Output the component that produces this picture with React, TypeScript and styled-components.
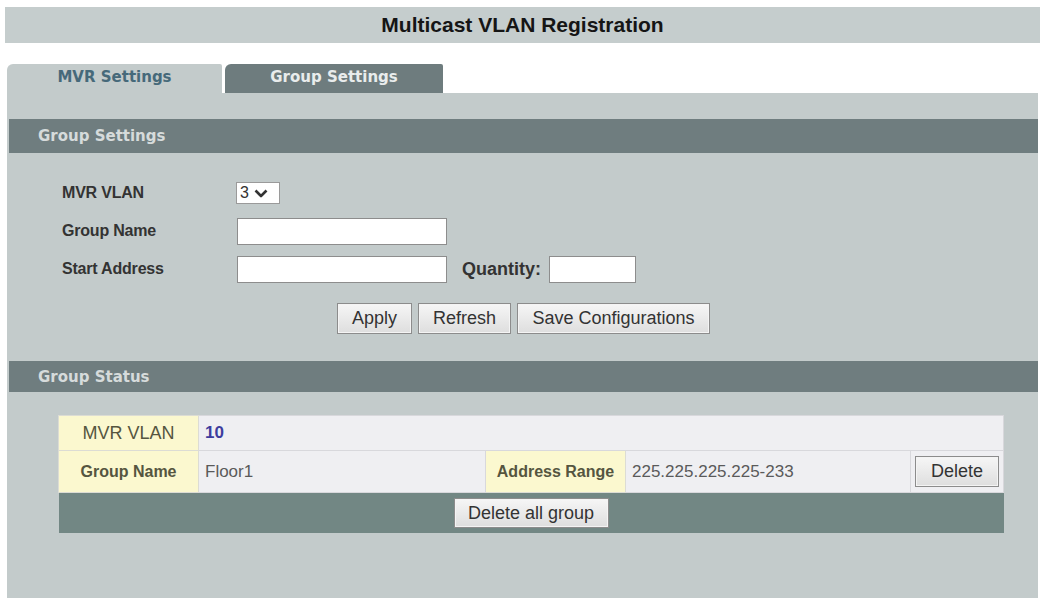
import React from 'react';
import styled, { createGlobalStyle } from 'styled-components';

const GlobalStyle = createGlobalStyle`
  html, body {
    margin: 0;
    padding: 0;
    background: #ffffff;
  }
  body {
    font-family: "Liberation Sans", Arial, sans-serif;
  }
`;

const Page = styled.div`
  width: 1043px;
  height: 601px;
  padding: 7px 3px 0 5px;
  box-sizing: border-box;
  display: flex;
  flex-direction: column;
`;

const TitleBar = styled.div`
  height: 36px;
  background: #c5cdcd;
  display: flex;
  align-items: center;
  justify-content: center;
  font-size: 21px;
  font-weight: bold;
  color: #151515;
`;

const TabRow = styled.div`
  display: flex;
  gap: 3px;
  margin: 21px 0 0 2px;
  height: 29px;
`;

const Tab = styled.div<{ $active?: boolean }>`
  width: ${p => (p.$active ? 218 : 215)}px;
  background: ${p => (p.$active ? '#6e7c7e' : '#c3cbcb')};
  color: ${p => (p.$active ? '#e9ecec' : '#46697a')};
  border-top-left-radius: 6px;
  border-top-right-radius: 2px;
  font-family: "DejaVu Sans", Verdana, sans-serif;
  font-weight: bold;
  font-size: 15px;
  display: flex;
  align-items: center;
  justify-content: center;
  padding-bottom: 3px;
  box-sizing: border-box;
`;

const Panel = styled.div`
  flex: 1;
  margin: 0 2px 3px 2px;
  background: #c3cbcb;
  padding: 26px 0 0 2px;
  display: flex;
  flex-direction: column;
`;

const SectionHeader = styled.div<{ $h: number }>`
  height: ${p => p.$h}px;
  background: #6f7d7f;
  color: #d6dbdb;
  font-family: "DejaVu Sans", Verdana, sans-serif;
  font-weight: bold;
  font-size: 15px;
  display: flex;
  align-items: center;
  padding-left: 29px;
`;

const Form = styled.div`
  display: grid;
  grid-template-columns: 174px auto;
  grid-auto-rows: 38px;
  align-items: center;
  padding: 21px 0 0 53px;
`;

const Label = styled.div`
  font-size: 16px;
  font-weight: bold;
  color: #333;
  letter-spacing: -0.2px;
`;

const Controls = styled.div`
  display: flex;
  align-items: center;
`;

const SelectBox = styled.div`
  width: 44px;
  height: 22px;
  box-sizing: border-box;
  border: 1px solid #9a9a9a;
  background: #fff;
  display: flex;
  align-items: center;
  gap: 5px;
  padding-left: 3px;
  font-size: 16px;
  color: #333;
`;

const TextInput = styled.input<{ $w: number }>`
  width: ${p => p.$w}px;
  height: 27px;
  box-sizing: border-box;
  border: 1px solid #8d8d8d;
  background: #fff;
  margin: 0 0 0 1px;
  padding: 0 4px;
  font-family: inherit;
`;

const InlineLabel = styled.span`
  font-size: 18px;
  font-weight: bold;
  color: #333;
  margin: 0 7px 0 15px;
`;

const ButtonRow = styled.div`
  display: flex;
  justify-content: center;
  gap: 6px;
  margin: 15px 0 27px;
`;

const Button = styled.button<{ $w: number; $h?: number }>`
  width: ${p => p.$w}px;
  height: ${p => p.$h ?? 31}px;
  font-family: "Liberation Sans", Arial, sans-serif;
  font-size: 18px;
  color: #333;
  background: linear-gradient(#f6f6f6, #dedede);
  border: 1px solid #8c8c8c;
  box-shadow: inset 0 0 0 1px #f4f4f4;
  padding: 0;
  cursor: pointer;
`;

const StatusTable = styled.table`
  margin: 23px 0 0 49px;
  width: 945px;
  border-collapse: collapse;
  table-layout: fixed;
`;

const LabelCell = styled.td<{ $bold?: boolean }>`
  background: #fbf8cf;
  color: #555540;
  text-align: center;
  font-size: ${p => (p.$bold ? 16 : 18)}px;
  font-weight: ${p => (p.$bold ? 'bold' : 'normal')};
  border: 1px solid #dcdcd4;
  padding: 0;
`;

const ValueCell = styled.td<{ $strong?: boolean }>`
  background: #efeff2;
  color: ${p => (p.$strong ? '#3d3d9e' : '#5a5a5a')};
  font-weight: ${p => (p.$strong ? 'bold' : 'normal')};
  font-size: 17px;
  border: 1px solid #d8d8dc;
  padding: 0 0 0 6px;
`;

const ButtonCell = styled.td`
  background: #efeff2;
  border: 1px solid #d8d8dc;
  text-align: center;
  padding: 0;
`;

const FooterCell = styled.td`
  background: #728784;
  text-align: center;
  height: 40px;
  padding: 0;
`;

const Row = styled.tr<{ $h: number }>`
  height: ${p => p.$h}px;
`;

const Chevron = () => (
  <svg width="14" height="9" viewBox="0 0 14 9">
    <path d="M1.5 1.5 L7 7 L12.5 1.5" fill="none" stroke="#333" strokeWidth="2.6" strokeLinejoin="round" />
  </svg>
);

export default function App() {
  return (
    <Page>
      <GlobalStyle />
      <TitleBar>Multicast VLAN Registration</TitleBar>
      <TabRow>
        <Tab>MVR Settings</Tab>
        <Tab $active>Group Settings</Tab>
      </TabRow>
      <Panel>
        <SectionHeader $h={34}>Group Settings</SectionHeader>
        <Form>
          <Label>MVR VLAN</Label>
          <Controls>
            <SelectBox>
              <span>3</span>
              <Chevron />
            </SelectBox>
          </Controls>
          <Label>Group Name</Label>
          <Controls>
            <TextInput $w={210} />
          </Controls>
          <Label>Start Address</Label>
          <Controls>
            <TextInput $w={210} />
            <InlineLabel>Quantity:</InlineLabel>
            <TextInput $w={87} />
          </Controls>
        </Form>
        <ButtonRow>
          <Button $w={75}>Apply</Button>
          <Button $w={93}>Refresh</Button>
          <Button $w={193}>Save Configurations</Button>
        </ButtonRow>
        <SectionHeader $h={31}>Group Status</SectionHeader>
        <StatusTable>
          <colgroup>
            <col style={{ width: 140 }} />
            <col style={{ width: 287 }} />
            <col style={{ width: 140 }} />
            <col style={{ width: 285 }} />
            <col style={{ width: 93 }} />
          </colgroup>
          <tbody>
            <Row $h={35}>
              <LabelCell>MVR VLAN</LabelCell>
              <ValueCell $strong colSpan={4}>10</ValueCell>
            </Row>
            <Row $h={42}>
              <LabelCell $bold>Group Name</LabelCell>
              <ValueCell>Floor1</ValueCell>
              <LabelCell $bold>Address Range</LabelCell>
              <ValueCell>225.225.225.225-233</ValueCell>
              <ButtonCell>
                <Button $w={84}>Delete</Button>
              </ButtonCell>
            </Row>
            <tr>
              <FooterCell colSpan={5}>
                <Button $w={155} $h={30}>Delete all group</Button>
              </FooterCell>
            </tr>
          </tbody>
        </StatusTable>
      </Panel>
    </Page>
  );
}
